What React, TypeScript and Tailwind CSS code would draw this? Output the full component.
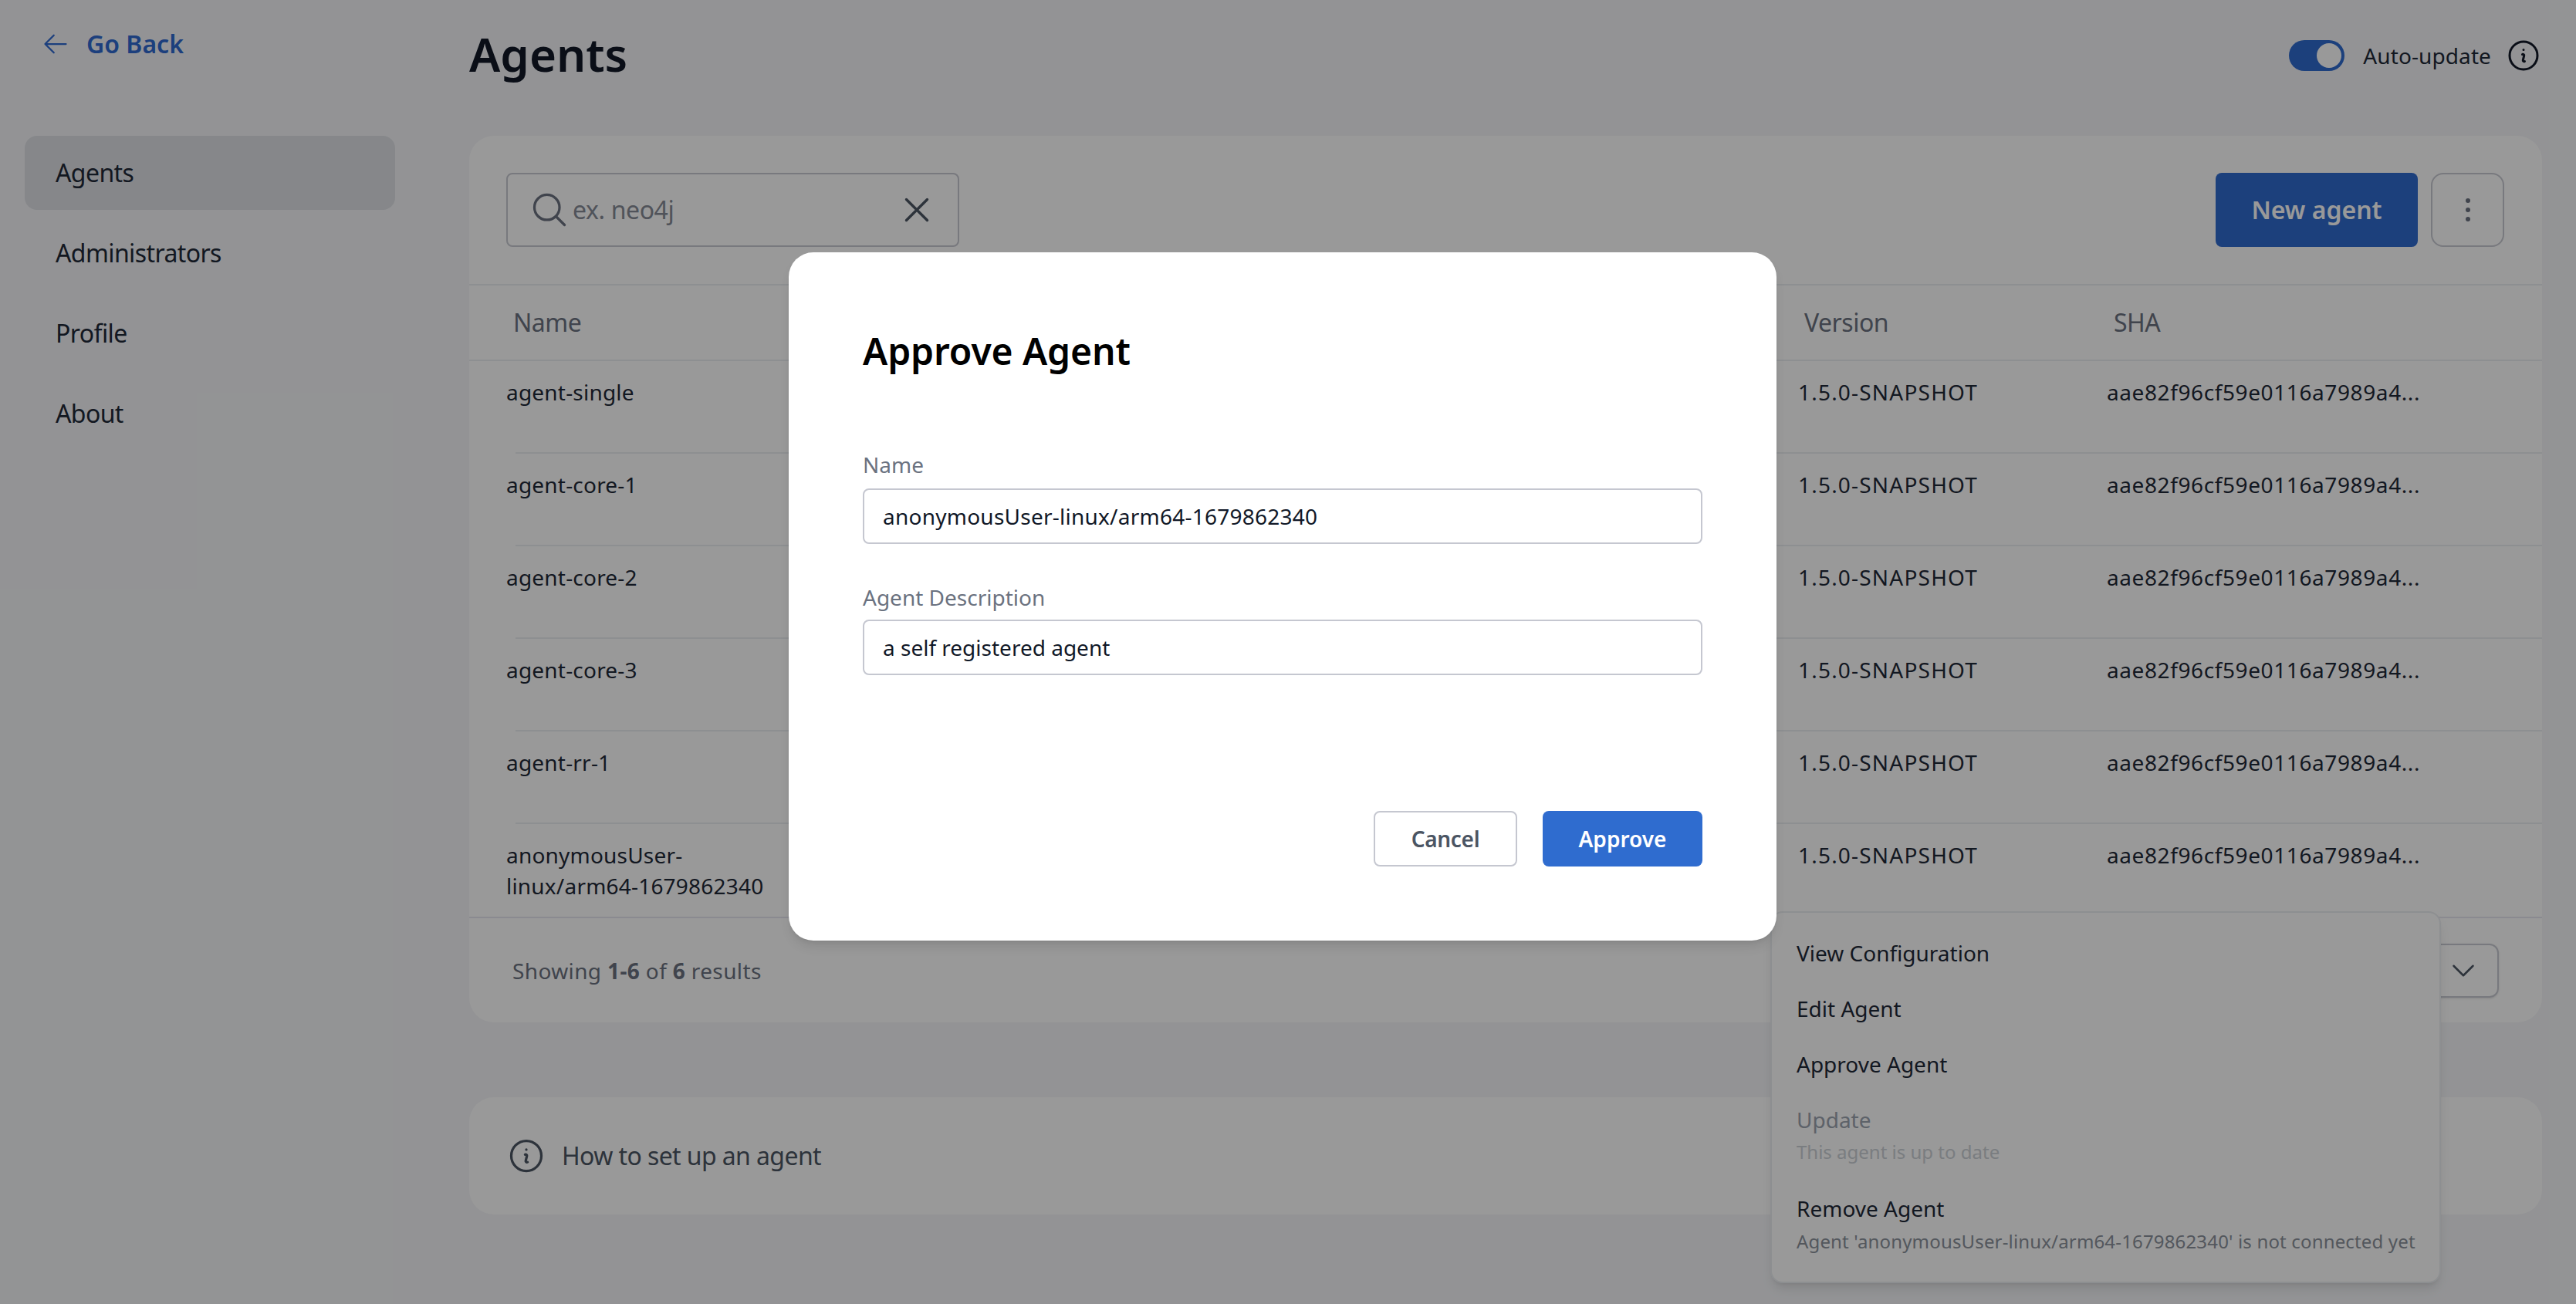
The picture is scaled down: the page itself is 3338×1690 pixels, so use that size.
import {
  HiOutlineArrowLeft,
  HiOutlineChevronDown,
  HiOutlineEllipsisVertical,
  HiOutlineInformationCircle,
  HiOutlineMagnifyingGlass,
  HiOutlineXMark,
} from 'react-icons/hi2';

const navItems = ['Agents', 'Administrators', 'Profile', 'About'];

const rows = [
  'agent-single',
  'agent-core-1',
  'agent-core-2',
  'agent-core-3',
  'agent-rr-1',
  'anonymousUser-linux/arm64-1679862340',
];

const Sidebar = () => (
  <aside className="w-[608px] shrink-0">
    <a className="flex h-[40px] items-center mt-[37px] ml-[54px] gap-[22px] text-[32px] leading-[40px] font-semibold text-[#3069d0]">
      <HiOutlineArrowLeft className="h-[36px] w-[36px]" />
      <span>Go Back</span>
    </a>
    <nav className="mt-[99px] ml-[32px] flex w-[480px] flex-col gap-[8px]">
      {navItems.map((item, i) => (
        <div
          key={item}
          className={`flex h-[96px] items-center rounded-[16px] pl-[40px] text-[32px] tracking-[-0.6px] text-[#1f2937] ${i === 0 ? 'bg-[#dfe1e6]' : ''}`}
        >
          {item}
        </div>
      ))}
    </nav>
  </aside>
);

const Toolbar = () => (
  <div className="flex h-[192px] items-center justify-between pl-[48px] pr-[49px]">
    <div className="flex h-[96px] w-[587px] items-center rounded-[8px] border-2 border-[#c8cad2] pl-[28px] pr-[26px]">
      <HiOutlineMagnifyingGlass className="h-[52px] w-[52px] shrink-0 text-[#6b7280]" />
      <span className="ml-[4px] flex-1 text-[32px] tracking-[-0.4px] text-[#868b96]">ex. neo4j</span>
      <HiOutlineXMark className="h-[54px] w-[54px] text-[#4b5563]" />
    </div>
    <div className="flex items-center gap-[17px]">
      <button className="h-[96px] w-[262px] rounded-[8px] bg-[#306bcf] text-[32px] font-semibold text-white">New agent</button>
      <button className="flex h-[96px] w-[95px] items-center justify-center rounded-[16px] border-2 border-[#c8cad2] text-[#6b7280]">
        <HiOutlineEllipsisVertical className="h-[48px] w-[48px]" />
      </button>
    </div>
  </div>
);

const AgentsTable = () => (
  <div>
    <div className="flex h-[100px] items-center border-y-2 border-[#eceef2] text-[32px] tracking-[-0.5px] text-[#6b7280]">
      <span className="ml-[57px] w-[1673px]">Name</span>
      <span className="w-[401px]">Version</span>
      <span>SHA</span>
    </div>
    {rows.map((name, i) => (
      <div
        key={name}
        className={`flex pt-[20px] text-[28px] leading-[40px] text-[#1f2937] ${i === rows.length - 1 ? 'h-[122px] border-b-2 border-[#e7e7f0]' : 'h-[120px] ml-[60px] border-b-2 border-[#eceef2]'}`}
      >
        <span className={`w-[360px] break-words tracking-[0.2px] ${i === rows.length - 1 ? 'ml-[48px]' : '-ml-[12px]'}`}>{name}</span>
        <span className="ml-[1314px] w-[400px] tracking-[1.2px]">1.5.0-SNAPSHOT</span>
        <span className="tracking-[0.6px]">aae82f96cf59e0116a7989a4...</span>
      </div>
    ))}
  </div>
);

const Footer = () => (
  <div className="flex h-[135px] items-center justify-between pl-[56px] pr-[56px]">
    <p className="text-[28px] tracking-[0.37px] text-[#6b7280]">
      Showing <b className="font-bold">1-6</b> of <b className="font-bold">6</b> results
    </p>
    <div className="flex h-[70px] w-[160px] items-center justify-end rounded-[12px] border-2 border-[#c8cad2] pr-[24px] text-[#4b5563] shadow-sm">
      <HiOutlineChevronDown className="h-[40px] w-[40px]" />
    </div>
  </div>
);

const RowMenu = () => (
  <div className="absolute left-[2294px] top-[1181px] w-[869px] rounded-[16px] border-2 border-[#eceef2] bg-white py-[16px] shadow-lg text-[28px] leading-[40px] text-[#1f2937]">
    <div className="px-[32px] py-[16px]">View Configuration</div>
    <div className="px-[32px] py-[16px]">Edit Agent</div>
    <div className="px-[32px] py-[16px]">Approve Agent</div>
    <div className="px-[32px] pt-[16px] pb-[21px] text-[#9ca3af]">
      Update
      <div className="mt-[6px] text-[24px] leading-[32px] text-[#cbd0d6]">This agent is up to date</div>
    </div>
    <div className="px-[32px] pt-[16px] pb-[20px]">
      Remove Agent
      <div className="mt-[7px] text-[24px] leading-[32px] tracking-[0.16px] text-[#8b919b] whitespace-nowrap">Agent 'anonymousUser-linux/arm64-1679862340' is not connected yet</div>
    </div>
  </div>
);

const ApproveDialog = () => (
  <div className="absolute inset-0 bg-black/40 pl-[1022px] pt-[327px]">
    <div className="h-[892px] w-[1280px] rounded-[32px] bg-white px-[96px] pt-[100px] shadow-lg">
      <h2 className="text-[48px] leading-[56px] font-semibold tracking-[-0.1px] text-black">Approve Agent</h2>
      <label className="mt-[99px] block text-[28px] leading-[40px] text-[#6b7280]">Name</label>
      <div className="mt-[11px] flex h-[72px] items-center rounded-[8px] border-2 border-[#c5c7d0] pl-[24px] text-[28px] tracking-[0.24px] text-[#111827]">
        anonymousUser-linux/arm64-1679862340
      </div>
      <label className="mt-[49px] block text-[28px] leading-[40px] text-[#6b7280]">Agent Description</label>
      <div className="mt-[9px] flex h-[72px] items-center rounded-[8px] border-2 border-[#c5c7d0] pl-[24px] text-[28px] text-[#111827]">
        a self registered agent
      </div>
      <div className="mt-[176px] flex justify-end gap-[33px]">
        <button className="h-[72px] w-[186px] rounded-[8px] border-2 border-[#c5c7d0] text-[28px] font-semibold tracking-[-0.3px] text-[#4b5563]">Cancel</button>
        <button className="h-[72px] w-[207px] rounded-[8px] bg-[#2f6ccf] text-[28px] font-semibold text-white">Approve</button>
      </div>
    </div>
  </div>
);

export default function App() {
  return (
    <div className="relative flex h-[1690px] w-[3338px] overflow-hidden bg-[#f5f6f9] font-['Noto_Sans',sans-serif]">
      <Sidebar />
      <main className="w-[2686px]">
        <header className="flex h-[176px] items-start justify-between">
          <h1 className="mt-[34px] text-[60px] leading-[72px] font-semibold text-[#111827]">Agents</h1>
          <div className="mt-[48px] flex items-center text-[28px] text-[#1f2937]">
            <div className="flex h-[40px] w-[72px] items-center justify-end rounded-full bg-[#306bcf] pr-[4px]">
              <div className="h-[32px] w-[32px] rounded-full bg-white" />
            </div>
            <span className="ml-[24px] tracking-[0.1px]">Auto-update</span>
            <HiOutlineInformationCircle className="ml-[18px] h-[48px] w-[48px] text-[#111827]" />
          </div>
        </header>
        <section className="rounded-[32px] bg-white">
          <Toolbar />
          <AgentsTable />
          <Footer />
        </section>
        <section className="mt-[97px] flex h-[152px] items-center rounded-[32px] bg-white pl-[48px] text-[32px] tracking-[-0.6px] text-[#4b5563]">
          <HiOutlineInformationCircle className="h-[52px] w-[52px]" />
          <span className="ml-[20px]">How to set up an agent</span>
        </section>
      </main>
      <RowMenu />
      <ApproveDialog />
    </div>
  );
}
